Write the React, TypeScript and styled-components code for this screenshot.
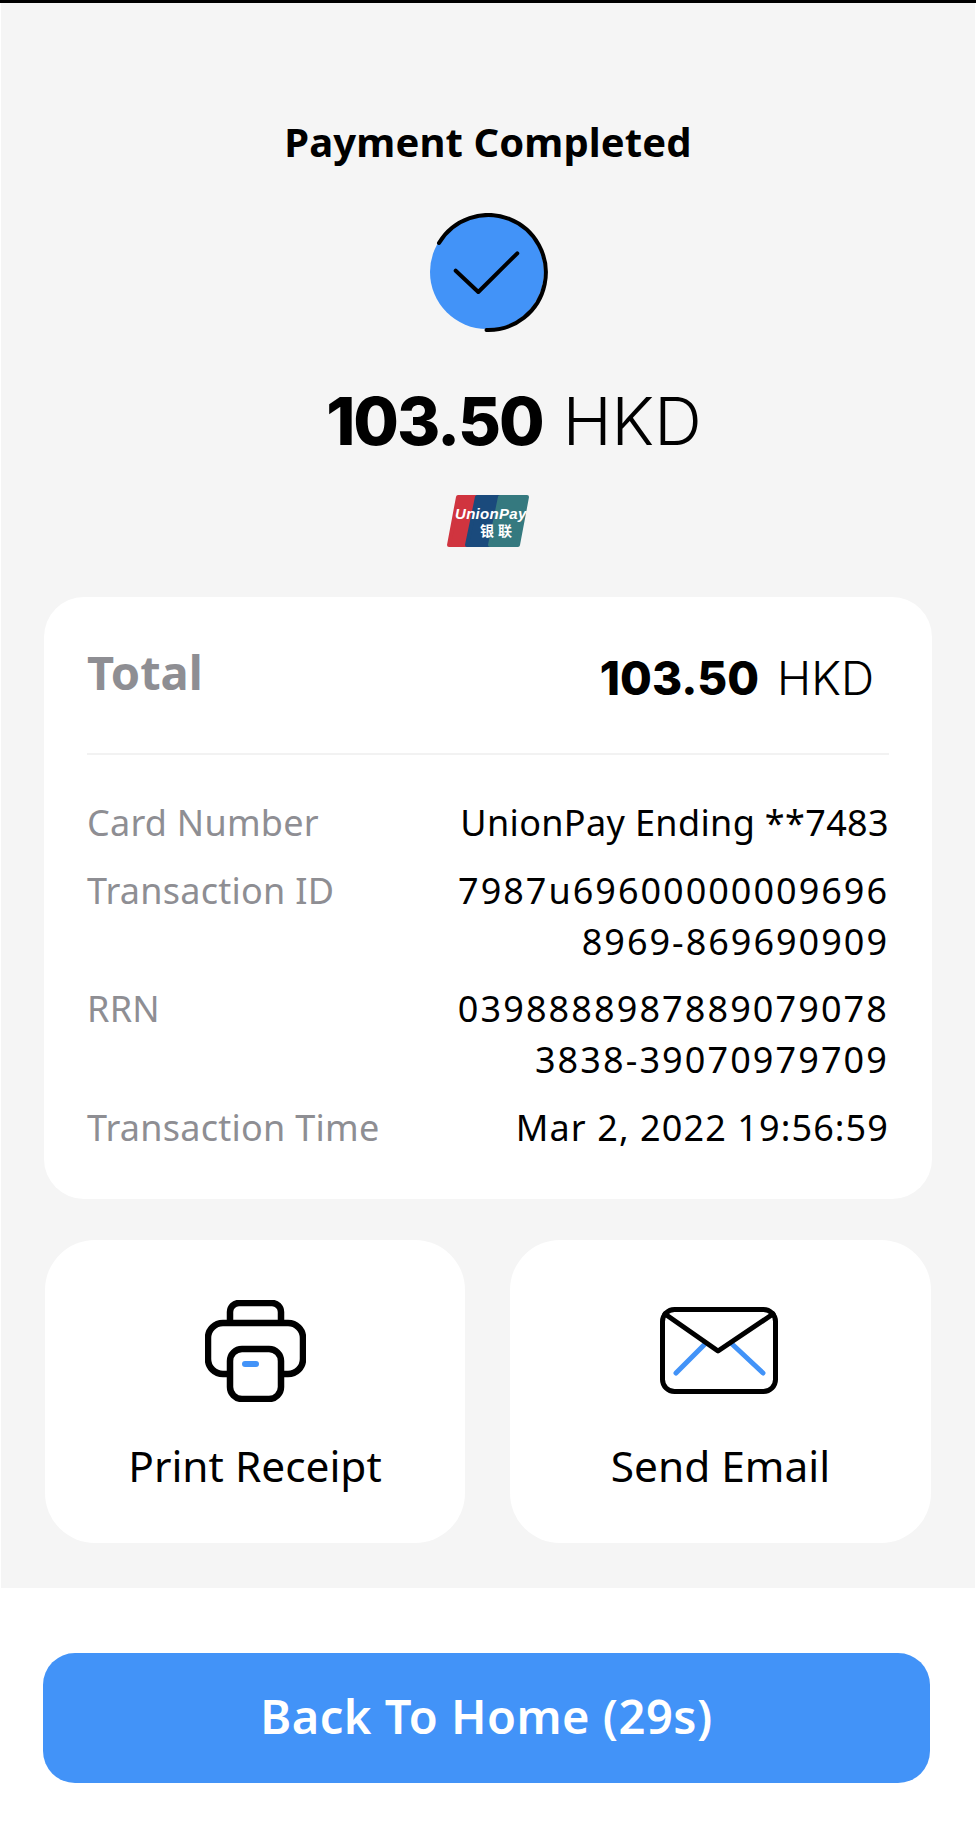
import React from 'react';
import styled, { createGlobalStyle } from 'styled-components';

const BLUE = '#4293f8';

const GlobalStyle = createGlobalStyle`
  html, body {
    margin: 0;
    padding: 0;
    background: #ffffff;
    font-family: "Noto Sans", Lato, sans-serif;
    color: #000000;
  }
`;

const Page = styled.div`
  width: 976px;
  height: 1848px;
  box-sizing: border-box;
  border-top: 3px solid #000000;
  display: flex;
  flex-direction: column;
`;

const Main = styled.main`
  height: 1585px;
  box-sizing: border-box;
  margin: 0 1px;
  padding: 114px 43px 0;
  background: #f5f5f5;
  display: flex;
  flex-direction: column;
  align-items: center;
`;

const Title = styled.h1`
  margin: 0;
  font-size: 40px;
  line-height: 50px;
  font-weight: 700;
  letter-spacing: 0.1px;
`;

const StatusIcon = styled.svg`
  display: block;
  width: 118px;
  height: 120px;
  margin: 46px 0 0 1px;
`;

const Amount = styled.div`
  display: flex;
  align-items: baseline;
  margin-top: 48px;
  padding-left: 52px;
  font-family: Inter, sans-serif;
  font-size: 66px;
  line-height: 80px;
`;

const AmountValue = styled.span`
  font-weight: 800;
  letter-spacing: -2px;
`;

const AmountUnit = styled.span`
  font-weight: 300;
  margin-left: 20px;
`;

const Logo = styled.svg`
  display: block;
  width: 84px;
  height: 54px;
  margin-top: 33px;
`;

const Panel = styled.section`
  align-self: stretch;
  box-sizing: border-box;
  height: 602px;
  margin-top: 49px;
  padding: 0 43px;
  background: #ffffff;
  border-radius: 40px;
`;

const TotalRow = styled.div`
  height: 156px;
  display: flex;
  justify-content: space-between;
  align-items: center;
  border-bottom: 2px solid #f2f2f2;
`;

const TotalLabel = styled.span`
  font-size: 47px;
  line-height: 60px;
  font-weight: 700;
  color: #8e8e93;
  margin-bottom: 6px;
`;

const TotalAmount = styled.div`
  display: flex;
  align-items: baseline;
  margin-right: 15px;
  margin-top: 6px;
  font-family: Inter, sans-serif;
  font-size: 46px;
`;

const TotalUnit = styled.span`
  font-weight: 300;
  margin-left: 18px;
`;

const TotalValue = styled.span`
  font-weight: 800;
`;

const Details = styled.dl`
  margin: 0;
  padding-top: 42px;
  display: grid;
  grid-template-columns: auto 1fr;
  row-gap: 16.5px;
  font-size: 36px;
  line-height: 51px;
`;

const DetailLabel = styled.dt`
  color: #8e8e93;
  letter-spacing: 0.25px;
`;

const DetailValue = styled.dd<{ $spacing: number }>`
  margin: 0;
  text-align: right;
  letter-spacing: ${(p) => p.$spacing}px;
`;

const Actions = styled.div`
  align-self: stretch;
  display: grid;
  grid-template-columns: 420px 421px;
  justify-content: space-between;
  margin-top: 41px;
  padding: 0 1px;
`;

const ActionCard = styled.button`
  height: 303px;
  border: 0;
  padding: 0;
  background: #ffffff;
  border-radius: 50px;
  display: flex;
  flex-direction: column;
  align-items: center;
  font-family: inherit;
  color: #000000;
`;

const ActionIconBox = styled.div`
  height: 102px;
  margin-top: 60px;
  display: flex;
  align-items: center;
  justify-content: center;
`;

const MailIcon = styled.svg`
  display: block;
  margin: -2px 4px 0 0;
`;

const ActionLabel = styled.span`
  margin-top: 39px;
  font-size: 42.4px;
  line-height: 50px;
`;

const Footer = styled.footer`
  flex: 1;
  padding: 65px 46px 0 43px;
`;

const HomeButton = styled.button`
  width: 100%;
  height: 130px;
  border: 0;
  padding: 0 0 4px;
  border-radius: 32px;
  background: ${BLUE};
  color: #ffffff;
  font-family: inherit;
  font-size: 47px;
  font-weight: 600;
  letter-spacing: 0.5px;
`;

const App: React.FC = () => {
  const details = [
    { label: 'Card Number', value: ['UnionPay Ending **7483'], spacing: 0.35 },
    { label: 'Transaction ID', value: ['7987u69600000009696', '8969-869690909'], spacing: 2 },
    { label: 'RRN', value: ['0398888987889079078', '3838-39070979709'], spacing: 2.1 },
    { label: 'Transaction Time', value: ['Mar 2, 2022 19:56:59'], spacing: 1.1 },
  ];

  return (
    <Page>
      <GlobalStyle />
      <Main>
        <Title>Payment Completed</Title>
        <StatusIcon viewBox="0 0 118 120" fill="none" strokeLinecap="round" strokeLinejoin="round">
          <circle cx="57" cy="59" r="57" fill={BLUE} />
          <path d="M9 30A57.5 57.5 0 1 1 56.5 117" stroke="#000" strokeWidth="4" />
          <path d="M25.7 57.7L48.3 79L87.3 40.3" stroke="#000" strokeWidth="4" />
        </StatusIcon>
        <Amount>
          <AmountValue>103.50</AmountValue>
          <AmountUnit>HKD</AmountUnit>
        </Amount>
        <Logo viewBox="0 0 84 54">
          <g strokeWidth="4" strokeLinejoin="round">
            <path d="M12 3H40L30 51H3Z" fill="#d0343f" stroke="#d0343f" />
            <path d="M31 3H60L50 51H21Z" fill="#1a4a7c" stroke="#1a4a7c" />
            <path d="M54 3H81L72 51H44Z" fill="#35797f" stroke="#35797f" />
          </g>
          <text x="9" y="25" fill="#fff" fontFamily="Liberation Sans, sans-serif" fontSize="15" fontWeight="700" fontStyle="italic" letterSpacing="0.3">
            UnionPay
          </text>
          <text x="34" y="42" fill="#fff" fontFamily="Noto Sans CJK SC, sans-serif" fontSize="14" fontWeight="700" letterSpacing="4">
            银联
          </text>
        </Logo>
        <Panel>
          <TotalRow>
            <TotalLabel>Total</TotalLabel>
            <TotalAmount>
              <TotalValue>103.50</TotalValue>
              <TotalUnit>HKD</TotalUnit>
            </TotalAmount>
          </TotalRow>
          <Details>
            {details.map((item) => (
              <React.Fragment key={item.label}>
                <DetailLabel>{item.label}</DetailLabel>
                <DetailValue $spacing={item.spacing}>
                  {item.value.map((line) => (
                    <div key={line}>{line}</div>
                  ))}
                </DetailValue>
              </React.Fragment>
            ))}
          </Details>
        </Panel>
        <Actions>
          <ActionCard>
            <ActionIconBox>
              <svg width="101" height="102" viewBox="0 0 101 102" fill="none" stroke="#000" strokeWidth="6.5">
                <path d="M25 20V12a9 9 0 0 1 9-9h33a9 9 0 0 1 9 9v8" />
                <path d="M25 74H18a15 15 0 0 1-15-15V38a15 15 0 0 1 15-15h65a15 15 0 0 1 15 15v21a15 15 0 0 1-15 15h-7" />
                <rect x="25" y="49" width="51" height="50" rx="12" />
                <path d="M40 64H51" stroke={BLUE} strokeWidth="6" strokeLinecap="round" />
              </svg>
            </ActionIconBox>
            <ActionLabel>Print Receipt</ActionLabel>
          </ActionCard>
          <ActionCard>
            <ActionIconBox>
              <MailIcon width="118" height="87" viewBox="0 0 118 87" fill="none" stroke="#000" strokeWidth="5" strokeLinecap="round" strokeLinejoin="round">
                <path d="M16 66L45 37M72 37L103 66" stroke={BLUE} />
                <rect x="2.5" y="2.5" width="113" height="82" rx="12" />
                <path d="M5 7L58 44L113 7" />
              </MailIcon>
            </ActionIconBox>
            <ActionLabel>Send Email</ActionLabel>
          </ActionCard>
        </Actions>
      </Main>
      <Footer>
        <HomeButton>Back To Home (29s)</HomeButton>
      </Footer>
    </Page>
  );
};

export default App;
